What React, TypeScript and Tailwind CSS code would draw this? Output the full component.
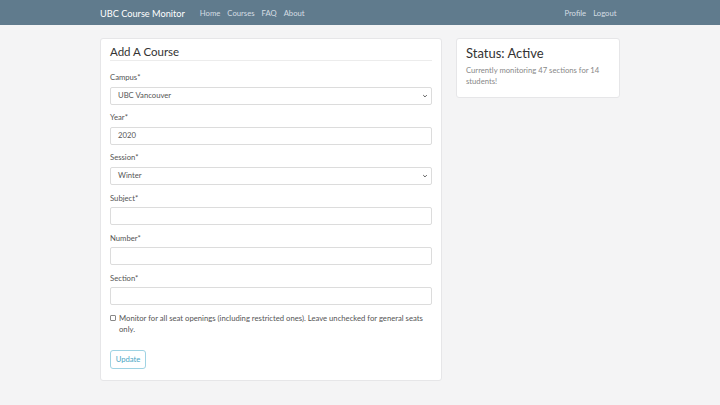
import { ReactNode } from "react";

const font = { fontFamily: "Lato, 'Open Sans', sans-serif" };

function Chevron() {
  return (
    <svg viewBox="0 0 10 10" className="w-[6px] h-[6px]" fill="none" stroke="#555" strokeWidth="1.6">
      <path d="M2 3.5 L5 6.5 L8 3.5" />
    </svg>
  );
}

function Field({ label, children }: { label: string; children: ReactNode }) {
  return (
    <div className="mb-[7.7px]">
      <div className="text-[7.7px] leading-[11px] mb-[3.5px] text-[#555]">{label}</div>
      {children}
    </div>
  );
}

function Box({ value, select = false }: { value?: string; select?: boolean }) {
  return (
    <div className="h-[18px] border border-[#dcdcdc] rounded-[2px] bg-white flex items-center justify-between pl-[7px] pr-[3px] text-[7.7px] text-[#555]">
      <span>{value}</span>
      {select && <Chevron />}
    </div>
  );
}

export default function App() {
  return (
    <div className="min-h-[405px] bg-[#f4f4f5]" style={font}>
      <nav className="h-[25px] bg-[#607b8d]">
        <div className="w-[520px] mx-auto h-full flex items-center pt-[2px]">
          <span className="text-white text-[9.2px]">UBC Course Monitor</span>
          <div className="flex gap-[7px] ml-[15px] text-[7.7px] text-[#d5dde3]">
            <span>Home</span>
            <span>Courses</span>
            <span>FAQ</span>
            <span>About</span>
          </div>
          <div className="flex gap-[7px] ml-auto mr-[3.5px] text-[7.7px] text-[#d5dde3]">
            <span>Profile</span>
            <span>Logout</span>
          </div>
        </div>
      </nav>

      <div className="w-[520px] mx-auto mt-[13px] flex gap-[14px] items-start">
        <div className="w-[342px] bg-white border border-[#e6e6e8] rounded-[3px] px-[9px] pt-[5.5px] pb-[11px]">
          <div className="text-[11.5px] leading-[14px] text-[#333] pb-[1px] border-b border-[#ececec]">Add A Course</div>
          <div className="mt-[11.5px]">
            <Field label="Campus*">
              <Box value="UBC Vancouver" select />
            </Field>
            <Field label="Year*">
              <Box value="2020" />
            </Field>
            <Field label="Session*">
              <Box value="Winter" select />
            </Field>
            <Field label="Subject*">
              <Box />
            </Field>
            <Field label="Number*">
              <Box />
            </Field>
            <Field label="Section*">
              <Box />
            </Field>
          </div>
          <div className="flex gap-[3px] text-[7.7px] leading-[11px] text-[#555] mt-[1px]">
            <div className="w-[6px] h-[6px] border border-[#888] rounded-[1px] mt-[2px] shrink-0" />
            <span>Monitor for all seat openings (including restricted ones). Leave unchecked for general seats only.</span>
          </div>
          <div className="mt-[15px] w-[36px] h-[19px] border border-[#9fd3e3] rounded-[3px] flex items-center justify-center text-[7.7px] text-[#4aa6c4]">
            Update
          </div>
        </div>

        <div className="w-[164px] bg-white border border-[#e6e6e8] rounded-[3px] px-[9px] pt-[6.5px] pb-[10px]">
          <div className="text-[13px] leading-[15px] text-[#333]">Status: Active</div>
          <div className="mt-[4px] text-[7.7px] leading-[11px] text-[#888]">
            Currently monitoring 47 sections for 14 students!
          </div>
        </div>
      </div>
    </div>
  );
}
